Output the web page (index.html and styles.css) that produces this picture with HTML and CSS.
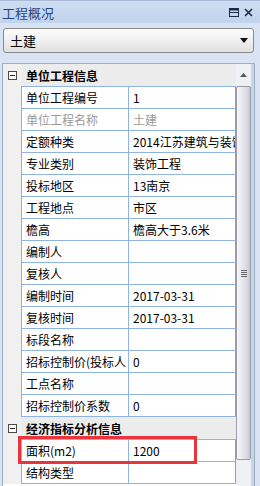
FILE: index.html
```html
<!DOCTYPE html>
<html lang="zh-CN">
<head>
    <meta charset="UTF-8">
    <title>工程概况</title>
    <link rel="stylesheet" href="styles.css">
</head>
<body>
    <div class="window">
        <div class="titlebar">
            <span class="title">工程概况</span>
            <span class="tools">
                <svg width="10" height="9" viewBox="0 0 10 9"><rect x="0.5" y="0.5" width="9" height="8" fill="none" stroke="#1c2b45"/><line x1="0" y1="1.5" x2="10" y2="1.5" stroke="#1c2b45" stroke-width="2"/><line x1="0.5" y1="4.5" x2="9.5" y2="4.5" stroke="#1c2b45"/></svg>
                <svg width="9" height="9" viewBox="0 0 9 9"><path d="M1 1 L8 8 M8 1 L1 8" stroke="#1c2b45" stroke-width="1.6"/></svg>
            </span>
        </div>
        <div class="combo">
            <span>土建</span>
            <svg width="8" height="5" viewBox="0 0 8 5"><path d="M0 0 H8 L4 5 Z" fill="#111"/></svg>
        </div>
        <div class="panel">
            <div class="grid">
                <div class="sec"><span class="gut"><i class="minus"></i></span><b>单位工程信息</b></div>
                <div class="row first"><span class="gut"></span><span class="name">单位工程编号</span><span class="val">1</span></div>
                <div class="row dim"><span class="gut"></span><span class="name">单位工程名称</span><span class="val">土建</span></div>
                <div class="row"><span class="gut"></span><span class="name">定额种类</span><span class="val">2014江苏建筑与装饰</span></div>
                <div class="row"><span class="gut"></span><span class="name">专业类别</span><span class="val">装饰工程</span></div>
                <div class="row"><span class="gut"></span><span class="name">投标地区</span><span class="val">13南京</span></div>
                <div class="row"><span class="gut"></span><span class="name">工程地点</span><span class="val">市区</span></div>
                <div class="row"><span class="gut"></span><span class="name">檐高</span><span class="val">檐高大于3.6米</span></div>
                <div class="row"><span class="gut"></span><span class="name">编制人</span><span class="val"></span></div>
                <div class="row"><span class="gut"></span><span class="name">复核人</span><span class="val"></span></div>
                <div class="row"><span class="gut"></span><span class="name">编制时间</span><span class="val">2017-03-31</span></div>
                <div class="row"><span class="gut"></span><span class="name">复核时间</span><span class="val">2017-03-31</span></div>
                <div class="row"><span class="gut"></span><span class="name">标段名称</span><span class="val"></span></div>
                <div class="row"><span class="gut"></span><span class="name">招标控制价(投标人</span><span class="val">0</span></div>
                <div class="row"><span class="gut"></span><span class="name">工点名称</span><span class="val"></span></div>
                <div class="row"><span class="gut"></span><span class="name">招标控制价系数</span><span class="val">0</span></div>
                <div class="sec"><span class="gut"><i class="minus"></i></span><b>经济指标分析信息</b></div>
                <div class="row first"><span class="gut"></span><span class="name">面积(m2)</span><span class="val">1200</span></div>
                <div class="row"><span class="gut"></span><span class="name">结构类型</span><span class="val"></span></div>
            </div>
            <div class="scroll">
                <div class="up"><svg width="7" height="4" viewBox="0 0 7 4"><path d="M0 4 L3.5 0 L7 4 Z" fill="#555"/></svg></div>
                <div class="thumb"><span class="grip"></span></div>
            </div>
        </div>
        <div class="mark"></div>
    </div>
</body>
</html>
```

FILE: styles.css
```css
body {
    margin: 0;
    width: 260px;
    height: 486px;
    overflow: hidden;
    background: #d8e4f3;
    font-family: "Noto Sans CJK SC", "Microsoft YaHei", sans-serif;
    font-size: 12px;
    color: #000;
}
.window {
    position: relative;
    height: 486px;
    display: flex;
    flex-direction: column;
}
.titlebar {
    height: 23px;
    box-sizing: border-box;
    display: flex;
    align-items: center;
    justify-content: space-between;
    padding: 0 7px 0 2px;
    border-top: 1px solid #a9bcd6;
    background: linear-gradient(#cddcf0, #c1d4ec);
}
.title {
    color: #1d4682;
    font-size: 13px;
}
.tools {
    display: flex;
    gap: 5px;
    align-items: center;
}
.combo {
    height: 25px;
    box-sizing: border-box;
    margin: 5px 6px 0 3px;
    padding: 0 5px 0 6px;
    display: flex;
    align-items: center;
    justify-content: space-between;
    border: 1px solid #8a8a8a;
    border-radius: 3px;
    background: linear-gradient(#fdfdfd, #f1f1f1 45%, #e0e0e0);
    font-size: 13px;
}
.panel {
    flex: 1;
    margin: 10px 5px 0 2px;
    display: flex;
    border: 1px solid #9fadc0;
    border-bottom: none;
    background: #fff;
}
.grid {
    width: 233px;
}
.sec {
    height: 22px;
    display: flex;
    align-items: center;
    background: #ececec;
}
.sec b {
    padding-left: 5px;
    font-weight: bold;
}
.gut {
    width: 18px;
    height: 100%;
    flex: none;
    display: flex;
    align-items: center;
    justify-content: center;
    background: #f0f0f0;
}
.minus {
    position: relative;
    width: 9px;
    height: 9px;
    box-sizing: border-box;
    border: 1px solid #4a4a4a;
    background: #fff;
}
.minus::after {
    content: "";
    position: absolute;
    left: 1px;
    right: 1px;
    top: 3px;
    height: 1px;
    background: #222;
}
.row {
    height: 22px;
    display: flex;
}
.row .name, .row .val {
    box-sizing: border-box;
    border-left: 1px solid #8fb3e2;
    border-bottom: 1px solid #8fb3e2;
    padding-left: 4px;
    line-height: 21px;
    white-space: nowrap;
    overflow: hidden;
}
.row .name {
    width: 107px;
}
.row .val {
    width: 108px;
    border-right: 1px solid #9c9c9c;
}
.row.first {
    height: 23px;
}
.row.first .name, .row.first .val {
    border-top: 1px solid #8fb3e2;
}
.dim .name, .dim .val {
    color: #9a9a9a;
}
.scroll {
    width: 18px;
    display: flex;
    flex-direction: column;
    background: #eef0f3;
    border-right: 3px solid #c9d6e9;
    box-sizing: border-box;
}
.up {
    height: 21px;
    display: flex;
    align-items: center;
    justify-content: center;
}
.thumb {
    height: 374px;
    margin-top: 1px;
    box-sizing: border-box;
    display: flex;
    align-items: center;
    justify-content: center;
    border: 1px solid #9c9caa;
    border-radius: 2px;
    background: linear-gradient(to right, #f6f6fa, #dcdce6 70%, #c8c8d4);
}
.grip {
    width: 6px;
    height: 7px;
    background: repeating-linear-gradient(#6a6a6a 0 1px, transparent 1px 2px);
}
.mark {
    position: absolute;
    left: 18px;
    top: 436px;
    width: 179px;
    height: 28px;
    box-sizing: border-box;
    border: 3px solid #e8343c;
}
```
